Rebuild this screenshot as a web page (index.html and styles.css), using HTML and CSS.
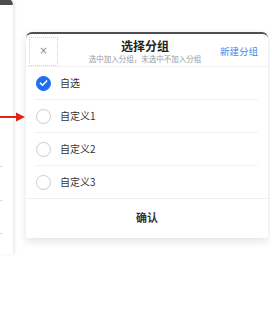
FILE: index.html
```html
<!DOCTYPE html>
<html lang="zh">
<head>
<meta charset="utf-8">
<link rel="stylesheet" href="styles.css">
</head>
<body>
<div class="page">
  <div class="bg-panel">
    <span class="tick t1"></span>
    <span class="tick t2"></span>
    <span class="tick t3"></span>
  </div>

  <div class="dialog">
    <div class="header">
      <div class="close-box">×</div>
      <div class="titles">
        <div class="title">选择分组</div>
        <div class="subtitle">选中加入分组，未选中不加入分组</div>
      </div>
      <div class="new-group">新建分组</div>
    </div>
    <ul class="list">
      <li class="row">
        <span class="radio checked">
          <svg viewBox="0 0 14 14" width="14" height="14"><path d="M3.6 7.2 L6 9.4 L10.4 4.8" fill="none" stroke="#fff" stroke-width="1.7" stroke-linecap="round" stroke-linejoin="round"/></svg>
        </span>
        <span class="label">自选</span>
      </li>
      <li class="row">
        <span class="radio"></span>
        <span class="label">自定义1</span>
      </li>
      <li class="row">
        <span class="radio"></span>
        <span class="label">自定义2</span>
      </li>
      <li class="row">
        <span class="radio"></span>
        <span class="label">自定义3</span>
      </li>
    </ul>
    <div class="footer">确认</div>
  </div>

  <svg class="arrow" width="26" height="10" viewBox="0 0 26 10">
    <rect x="0" y="4" width="18" height="2" fill="#e2231a"/>
    <path d="M16 0.5 L25 5 L16 9.5 Z" fill="#e2231a"/>
  </svg>
</div>
</body>
</html>
```

FILE: styles.css
```css
html, body {
  margin: 0;
  padding: 0;
  background: #ffffff;
}

body {
  font-family: "Noto Sans CJK SC", "Noto Sans", sans-serif;
  color: #333333;
}

.page {
  position: relative;
  width: 270px;
  height: 327px;
  overflow: hidden;
  background: #ffffff;
}

.bg-panel {
  position: absolute;
  left: -10px;
  top: -2px;
  width: 23px;
  height: 249px;
  background: #ffffff;
  border-top: 7px solid #4d4d4d;
  border-top-right-radius: 7px;
  box-shadow: 2px 0 3px rgba(0, 0, 0, 0.08);
}

.tick {
  position: absolute;
  left: 10px;
  width: 3px;
  height: 1px;
  background: #e2e2e2;
}
.t1 { top: 161px; }
.t2 { top: 195px; }
.t3 { top: 228px; }

.dialog {
  position: absolute;
  left: 26px;
  top: 32px;
  width: 242px;
  background: #ffffff;
  border-top: 2px solid #4f4f4f;
  border-radius: 6px 6px 2px 2px;
  box-shadow: 0 3px 8px rgba(0, 0, 0, 0.12);
}

.header {
  display: grid;
  grid-template-columns: 1fr auto 1fr;
  align-items: center;
  height: 32px;
  padding: 0 10px 0 3px;
  border-bottom: 1px solid #f2f2f2;
}

.close-box {
  justify-self: start;
  width: 27px;
  height: 27px;
  margin-top: 2px;
  border: 1px dotted #cfcfcf;
  display: flex;
  align-items: center;
  justify-content: center;
  font-family: "DejaVu Sans", sans-serif;
  font-size: 10px;
  color: #8a8a8a;
  line-height: 1;
}

.titles {
  display: flex;
  flex-direction: column;
  align-items: center;
  margin-left: 3px;
}

.title {
  font-size: 12px;
  font-weight: 700;
  color: #222222;
  line-height: 14px;
  margin-top: 2px;
}

.subtitle {
  font-size: 7.5px;
  color: #9a9a9a;
  line-height: 10px;
  margin-top: 1px;
}

.new-group {
  justify-self: end;
  font-size: 9.5px;
  color: #4f86e8;
  line-height: 12px;
  margin-top: 1px;
}

.list {
  list-style: none;
  margin: 0;
  padding: 0 10px 0 9px;
}

.row {
  display: flex;
  align-items: center;
  gap: 9px;
  height: 32px;
  padding-left: 1px;
  border-bottom: 1px solid #f2f2f2;
}

.row:last-child {
  border-bottom: none;
}

.radio {
  box-sizing: border-box;
  width: 15px;
  height: 15px;
  border-radius: 50%;
  border: 1px solid #cccccc;
  display: flex;
  align-items: center;
  justify-content: center;
  flex: none;
}

.radio.checked {
  background: #1e6ff0;
  border-color: #1e6ff0;
}

.label {
  font-size: 10px;
  color: #333333;
  line-height: 12px;
}

.footer {
  border-top: 1px solid #f0f0f0;
  height: 36px;
  padding-bottom: 3px;
  display: flex;
  align-items: center;
  justify-content: center;
  font-size: 11px;
  font-weight: 700;
  color: #333333;
}

.arrow {
  position: absolute;
  left: 0;
  top: 112px;
}
```
